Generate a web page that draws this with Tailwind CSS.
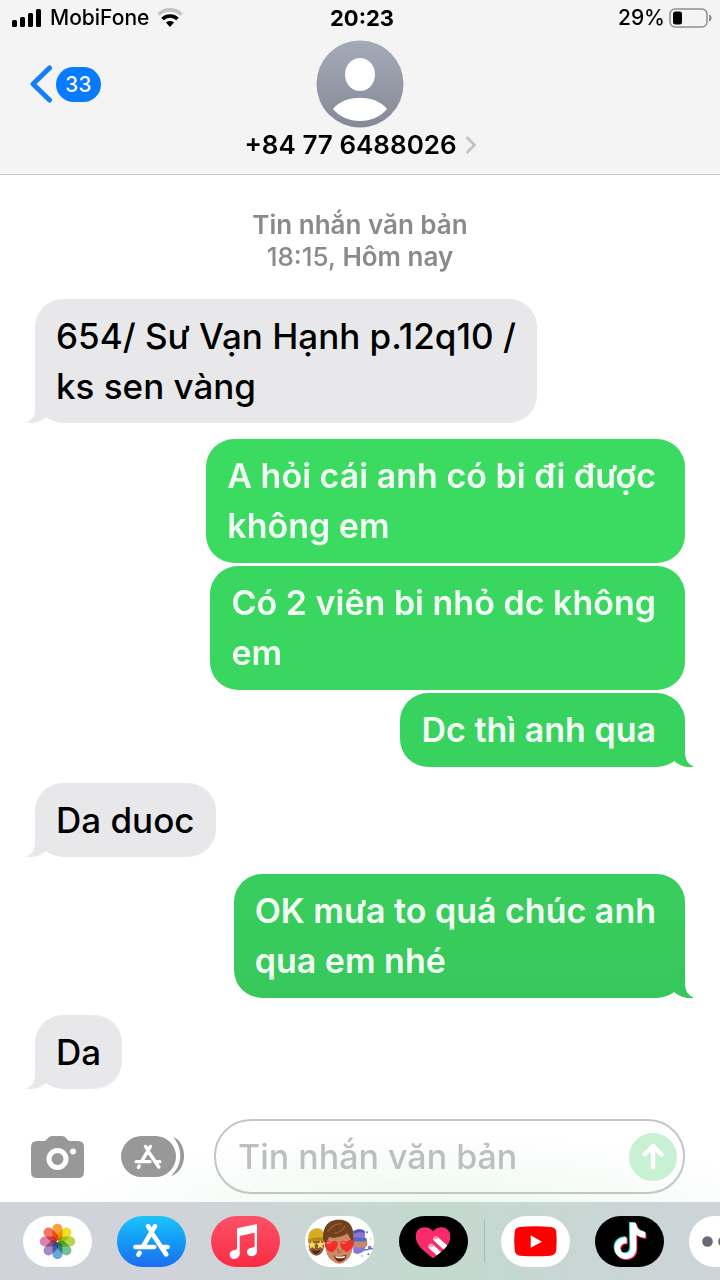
<!DOCTYPE html>
<html lang="vi">
<head>
  <meta charset="UTF-8">
  <meta name="viewport" content="width=device-width, initial-scale=1.0">
  <title>Tin nhắn</title>
  <script src="https://cdn.jsdelivr.net/npm/@tailwindcss/browser@4"></script>
</head>
<body class="min-h-screen flex flex-col bg-white font-['Inter','Noto_Sans',sans-serif] text-black overflow-x-hidden">
  <!-- shared shapes -->
  <svg class="hidden">
    <symbol id="tail" viewBox="0 0 24 32">
      <path d="M0 32C6 29 9 25 9 17V0L24 14L20 26C14 31 7 33 0 32Z" fill="currentColor"/>
    </symbol>
    <symbol id="store" viewBox="400 366 110 102">
      <g fill="none" stroke="#fff" stroke-width="14" stroke-linecap="round" stroke-linejoin="round">
        <path d="M465 376L431 434M407 438H463M445 376L452 387M460 402L499 460M487 438H503M419 456L416 461"/>
      </g>
    </symbol>
    <symbol id="note" viewBox="405 345 207 153">
      <path d="M510 366H528C530 382 540 391 556 393V410C546 410 537 407 529 401V441C529 462 515 474 497 474C478 474 464 460 464 441C464 421 480 408 500 409V427C488 426 481 433 481 442C481 451 488 457 497 457C506 457 511 450 511 441Z" fill="currentColor"/>
    </symbol>
  </svg>

  <header class="bg-[#f4f4f4] border-b border-[#c8c8ca] pb-3">
    <div class="grid grid-cols-3 items-center h-9 pl-3 pr-2 text-[21px] font-medium">
      <div class="flex items-center gap-2">
        <svg class="w-[30px] h-5 shrink-0" viewBox="0 0 30 20">
          <rect x="0" y="12" width="5" height="7" rx="1.5"/>
          <rect x="8" y="9" width="5" height="10" rx="1.5"/>
          <rect x="16" y="5" width="5" height="14" rx="1.5"/>
          <rect x="24" y="1" width="5" height="18" rx="1.5"/>
        </svg>
        <span>MobiFone</span>
        <svg class="w-[26px] h-5 shrink-0" viewBox="0 0 26 20" fill="none">
          <path d="M1.500 6.500C8 .3 18 .3 24.500 6.500" stroke="#c4c4c4" stroke-width="3.600"/>
          <path d="M5.500 11C9.700 7 16.300 7 20.500 11" stroke="#000" stroke-width="3.600"/>
          <path d="M9 14.500C11.300 12.500 14.700 12.500 17 14.500L13 19Z" fill="#000"/>
        </svg>
      </div>
      <span class="text-center font-bold text-[22px]">20:23</span>
      <div class="flex items-center justify-end gap-1">
        <span>29%</span>
        <svg class="w-[43px] h-5" viewBox="0 0 43 20">
          <rect x="1" y="1" width="37" height="18" rx="5" fill="none" stroke="#8e8e8e" stroke-width="1.500"/>
          <rect x="4" y="3.500" width="9" height="13" rx="2.500"/>
          <path d="M40 6.500C43.500 7.500 43.500 12.500 40 13.500Z" fill="#8e8e8e"/>
        </svg>
      </div>
    </div>
    <div class="grid grid-cols-3 items-center pt-1">
      <button class="flex items-center gap-1 pl-[30px]" aria-label="Quay lại">
        <svg class="w-[22px] h-[38px]" viewBox="0 0 22 38"><path d="M19.500 3L3 19L19.500 35" fill="none" stroke="#157efb" stroke-width="5" stroke-linecap="round" stroke-linejoin="round"/></svg>
        <span class="rounded-full bg-[#087bff] text-white text-[21px] font-medium w-[45px] h-[35px] leading-[35px] text-center">33</span>
      </button>
      <svg class="w-[88px] h-[88px] mx-auto" viewBox="0 0 88 88">
        <linearGradient id="av" x2="0" y2="1"><stop stop-color="#a4aab8"/><stop offset="1" stop-color="#868994"/></linearGradient>
        <circle cx="44" cy="44" r="43.500" fill="url(#av)"/>
        <ellipse cx="44" cy="34.500" rx="15" ry="16.500" fill="#fff"/>
        <path d="M17 69C29 54 59 54 71 69C58 85 30 85 17 69Z" fill="#fff"/>
      </svg>
    </div>
    <a href="#" class="flex items-center justify-center gap-2 text-[26px] font-semibold leading-[34px]">
      <span>+84 77 6488026</span>
      <svg class="w-[11px] h-5" viewBox="0 0 11 20"><path d="M1.500 2L9.500 10L1.500 18" fill="none" stroke="#c3c3c5" stroke-width="2.800"/></svg>
    </a>
  </header>

  <main class="flex-1 flex flex-col items-start px-[35px] pt-[34px] text-[35px] leading-[50px] font-medium">
    <p class="self-center text-center text-[26px] leading-8 font-semibold text-[#8a8a8d] mb-[26px]">
      Tin nhắn văn bản<br><span class="font-medium">18:15,</span> Hôm nay
    </p>
    <div class="relative rounded-[28px] bg-[#e8e8ea] px-[21px] py-3">
      654/ Sư Vạn Hạnh p.12q10 /<br>ks sen vàng
      <svg class="absolute bottom-0 -left-[9px] w-6 h-8 text-[#e8e8ea]"><use href="#tail"/></svg>
    </div>
    <div class="self-end mt-4 rounded-[28px] bg-[#3bda61] text-[#f3fff5] text-[34px] font-semibold pl-[21px] pr-[29px] py-3">
      A hỏi cái anh có bi đi được<br>không em
    </div>
    <div class="self-end mt-[3px] rounded-[28px] bg-[#39d760] text-[#f3fff5] text-[34px] font-semibold pl-[21px] pr-[29px] py-3">
      Có 2 viên bi nhỏ dc không<br>em
    </div>
    <div class="relative self-end mt-[3px] rounded-[28px] bg-[#38d25e] text-[#f3fff5] text-[34px] font-semibold pl-[21px] pr-[29px] py-3">
      Dc thì anh qua
      <svg class="absolute bottom-0 -right-[9px] w-6 h-8 -scale-x-100 text-[#38d25e]"><use href="#tail"/></svg>
    </div>
    <div class="relative mt-4 rounded-[28px] bg-[#e8e8ea] px-[21px] py-3">
      Da duoc
      <svg class="absolute bottom-0 -left-[9px] w-6 h-8 text-[#e8e8ea]"><use href="#tail"/></svg>
    </div>
    <div class="relative self-end mt-[17px] rounded-[28px] bg-linear-to-b from-[#38ce5d] to-[#37c85b] text-[#f3fff5] text-[34px] font-semibold pl-[21px] pr-[29px] py-3">
      OK mưa to quá chúc anh<br>qua em nhé
      <svg class="absolute bottom-0 -right-[9px] w-6 h-8 -scale-x-100 text-[#37c85b]"><use href="#tail"/></svg>
    </div>
    <div class="relative mt-[17px] rounded-[28px] bg-[#e8e8ea] px-[21px] py-3">
      Da
      <svg class="absolute bottom-0 -left-[9px] w-6 h-8 text-[#e8e8ea]"><use href="#tail"/></svg>
    </div>
  </main>

  <footer>
    <form class="flex items-center pl-[31px] pr-[35px] pb-2 bg-radial-[at_60%_110%] from-[#edf8f0] to-white to-60%">
      <button type="button" aria-label="Máy ảnh">
        <svg class="w-[53px] h-[42px]" viewBox="0 0 53 42">
          <path d="M6 5H13C16 5 17 0 21 0H31C35 0 36 5 39 5H47Q53 5 53 11V36Q53 42 47 42H6Q0 42 0 36V11Q0 5 6 5Z" fill="#989898"/>
          <circle cx="26.500" cy="23" r="8.500" fill="none" stroke="#fff" stroke-width="5"/>
          <circle cx="42" cy="15.500" r="3" fill="#fff"/>
        </svg>
      </button>
      <button type="button" class="ml-[37px]" aria-label="Ứng dụng">
        <svg class="w-16 h-[42px]" viewBox="0 0 64 42">
          <rect width="55" height="41" rx="20.500" fill="#989898"/>
          <path d="M52 1C67 6 67 35 50 40C62 29 62 12 52 1Z" fill="#989898"/>
          <use href="#store" x="13" y="8" width="28" height="25"/>
        </svg>
      </button>
      <div class="ml-[29px] flex-1 min-w-0 h-[75px] flex items-center rounded-[37px] border-2 border-[#c3c6c4] pl-[22px] pr-[6px]">
        <input type="text" aria-label="Tin nhắn văn bản" placeholder="Tin nhắn văn bản" class="flex-1 min-w-0 h-full text-[34px] font-medium outline-none placeholder:text-[#bdbfbe]">
        <button type="button" aria-label="Gửi" class="shrink-0 size-12 rounded-full bg-[#c8f0d2]">
          <svg class="size-12" viewBox="0 0 48 48"><path d="M24 34V14M15.500 21.500L24 13L32.500 21.500" fill="none" stroke="#fff" stroke-width="4.500" stroke-linecap="round" stroke-linejoin="round"/></svg>
        </button>
      </div>
    </form>

    <nav class="flex items-center gap-[25px] h-[78px] pl-[23px] overflow-hidden bg-linear-to-r from-[#d0d3d9] from-25% via-[#c3d9cf] via-60% to-[#cdd4d9]">
      <button class="shrink-0 w-[69px] h-[51px] rounded-full bg-white overflow-hidden" aria-label="Ảnh">
        <svg class="w-[69px] h-[51px]" viewBox="69 345 207 153">
          <g class="*:mix-blend-multiply" transform="translate(172.500 421.500)">
            <rect x="-15" y="-53" width="30" height="51" rx="15" fill="#f9a138"/>
            <rect x="-15" y="-53" width="30" height="51" rx="15" fill="#efdf28" transform="rotate(45)"/>
            <rect x="-15" y="-53" width="30" height="51" rx="15" fill="#b4d646" transform="rotate(90)"/>
            <rect x="-15" y="-53" width="30" height="51" rx="15" fill="#75c494" transform="rotate(135)"/>
            <rect x="-15" y="-53" width="30" height="51" rx="15" fill="#67a7dc" transform="rotate(180)"/>
            <rect x="-15" y="-53" width="30" height="51" rx="15" fill="#a48bc6" transform="rotate(225)"/>
            <rect x="-15" y="-53" width="30" height="51" rx="15" fill="#dc83ac" transform="rotate(270)"/>
            <rect x="-15" y="-53" width="30" height="51" rx="15" fill="#f37962" transform="rotate(315)"/>
          </g>
        </svg>
      </button>
      <button class="shrink-0 w-[69px] h-[51px] rounded-full bg-linear-to-b from-[#1fc4fa] to-[#1d6cf0]" aria-label="App Store">
        <svg class="w-[69px] h-[51px]" viewBox="0 0 69 51"><use href="#store" x="16" y="7" width="37" height="34"/></svg>
      </button>
      <button class="shrink-0 w-[69px] h-[51px] rounded-full bg-linear-to-b from-[#fb5069] to-[#fa2a42]" aria-label="Nhạc">
        <svg class="w-[69px] h-[51px]" viewBox="33 75 207 153">
          <path d="M111 112L171 99V182C171 198 141 201 141 184C141 169 156 171 164 167V125L119 135V189C119 207 89 209 89 192C89 176 104 179 111 174Z" fill="#fff"/>
        </svg>
      </button>
      <button class="shrink-0 w-[69px] h-[51px] rounded-full bg-white overflow-hidden" aria-label="Memoji">
        <svg class="w-[69px] h-[51px]" viewBox="45 28 207 153">
          <!-- left face, yellow cap and star eyes -->
          <ellipse cx="79" cy="118" rx="23" ry="29" fill="#8a5a33"/>
          <path d="M54 106C52 78 64 65 82 65C96 66 104 76 104 100Z" fill="#d9ad22"/>
          <path d="M55 99Q78 88 104 94V103Q78 98 55 108Z" fill="#b88a15"/>
          <path d="M66 103L70 110L79 110L73 117L76 126L67 122L58 127L60 117L53 111L62 110ZM91 101L95 109L104 110L97 117L99 126L91 121L83 125L85 116L79 110L88 109Z" fill="#f7d95b"/>
          <path d="M65 129Q78 136 91 129Q87 142 78 142Q69 140 65 129Z" fill="#4c2418"/>
          <!-- right face, party hat -->
          <path d="M190 73Q210 62 224 73L226 102L231 109L222 133Q203 149 190 137Z" fill="#8579d5"/>
          <path d="M190 73Q209 62 224 73V80Q207 73 190 82Z" fill="#4e55b5"/>
          <path d="M192 107L232 102V118Q212 126 192 121Z" fill="#c58c6b"/>
          <path d="M190 92L230 95V104H190Z" fill="#5867c7"/>
          <path d="M222 130C240 131 247 120 239 119C231 121 238 130 249 125" fill="none" stroke="#7469c8" stroke-width="4"/>
          <g fill="#596ad2"><circle cx="231" cy="77" r="3"/><circle cx="235" cy="143" r="3"/><circle cx="216" cy="148" r="2"/></g>
          <circle cx="242" cy="97" r="2" fill="#e8b750"/>
          <!-- middle face, heart eyes -->
          <path d="M108 103Q103 145 125 161Q148 182 170 161Q193 142 188 92L165 68H122Z" fill="#d08860"/>
          <path d="M101 107C93 64 113 37 149 39C182 39 195 66 190 110L181 96L172 80C153 95 127 95 118 90L108 109Z" fill="#71401f"/>
          <path d="M113 76Q129 49 156 52M132 81Q157 75 165 57" fill="none" stroke="#995e34" stroke-width="4"/>
          <path d="M128 137C105 134 100 111 107 105C114 99 121 105 123 110C128 99 142 101 143 110C144 122 135 130 128 137Z" fill="#f22e2c"/>
          <path d="M169 136C155 128 149 119 151 108C155 99 167 101 170 108C174 95 190 97 192 108C192 121 181 131 169 136Z" fill="#f22e2c"/>
          <path d="M112 110Q114 106 118 109M157 109Q160 105 163 109" fill="none" stroke="#ff8b80" stroke-width="4" stroke-linecap="round"/>
          <path d="M145 126Q140 135 147 137L153 135" fill="none" stroke="#ad6144" stroke-width="4"/>
          <path d="M131 147Q150 151 170 144Q165 165 148 165Q136 161 131 147Z" fill="#672519"/>
          <path d="M135 148Q151 152 166 147L163 153Q149 157 138 153Z" fill="#fff"/>
        </svg>
      </button>
      <button class="shrink-0 w-[69px] h-[51px] rounded-full bg-black" aria-label="Digital Touch">
        <svg class="w-[69px] h-[51px]" viewBox="597 75 207 153">
          <clipPath id="heart"><path d="M699 202C674 182 647 164 647 136C647 107 682 100 699 121C717 100 751 107 751 137C751 164 724 182 699 202Z"/></clipPath>
          <g clip-path="url(#heart)">
            <rect x="640" y="100" width="120" height="110" fill="#fb2b6b"/>
            <path d="M708 144L748 180M694 167L732 202" stroke="#fff" stroke-width="16" stroke-linecap="round"/>
            <path d="M703 144Q706 137 713 142M689 167Q692 160 699 165" fill="none" stroke="#fb78a1" stroke-width="5"/>
          </g>
        </svg>
      </button>
      <div class="shrink-0 w-px h-11 bg-[#a9bab4] -mx-[9px]"></div>
      <button class="shrink-0 w-[69px] h-[51px] rounded-full bg-white" aria-label="YouTube">
        <svg class="w-[69px] h-[51px]" viewBox="124 345 207 153">
          <path d="M181 378Q227 374 273 378Q289 379 290 394Q292 421 290 448Q288 463 273 464Q227 468 181 464Q166 463 165 448Q162 421 165 394Q166 379 181 378Z" fill="#fe0000"/>
          <path d="M213 403L247 422L213 440Z" fill="#fff"/>
        </svg>
      </button>
      <button class="shrink-0 w-[69px] h-[51px] rounded-full bg-black" aria-label="TikTok">
        <svg class="w-[69px] h-[51px]" viewBox="0 0 69 51">
          <use href="#note" x="-1" y="-1" width="69" height="51" class="text-[#35e5df]"/>
          <use href="#note" x="1" y="1" width="69" height="51" class="text-[#fb3156]"/>
          <use href="#note" width="69" height="51" class="text-white"/>
        </svg>
      </button>
      <button class="shrink-0 w-[69px] h-[51px] rounded-full bg-white" aria-label="Thêm">
        <svg class="w-[69px] h-[51px]" viewBox="0 0 69 51" fill="#686a75"><circle cx="18.500" cy="25.500" r="5.300"/><circle cx="34.500" cy="25.500" r="5.300"/><circle cx="50.500" cy="25.500" r="5.300"/></svg>
      </button>
    </nav>
  </footer>
</body>
</html>
